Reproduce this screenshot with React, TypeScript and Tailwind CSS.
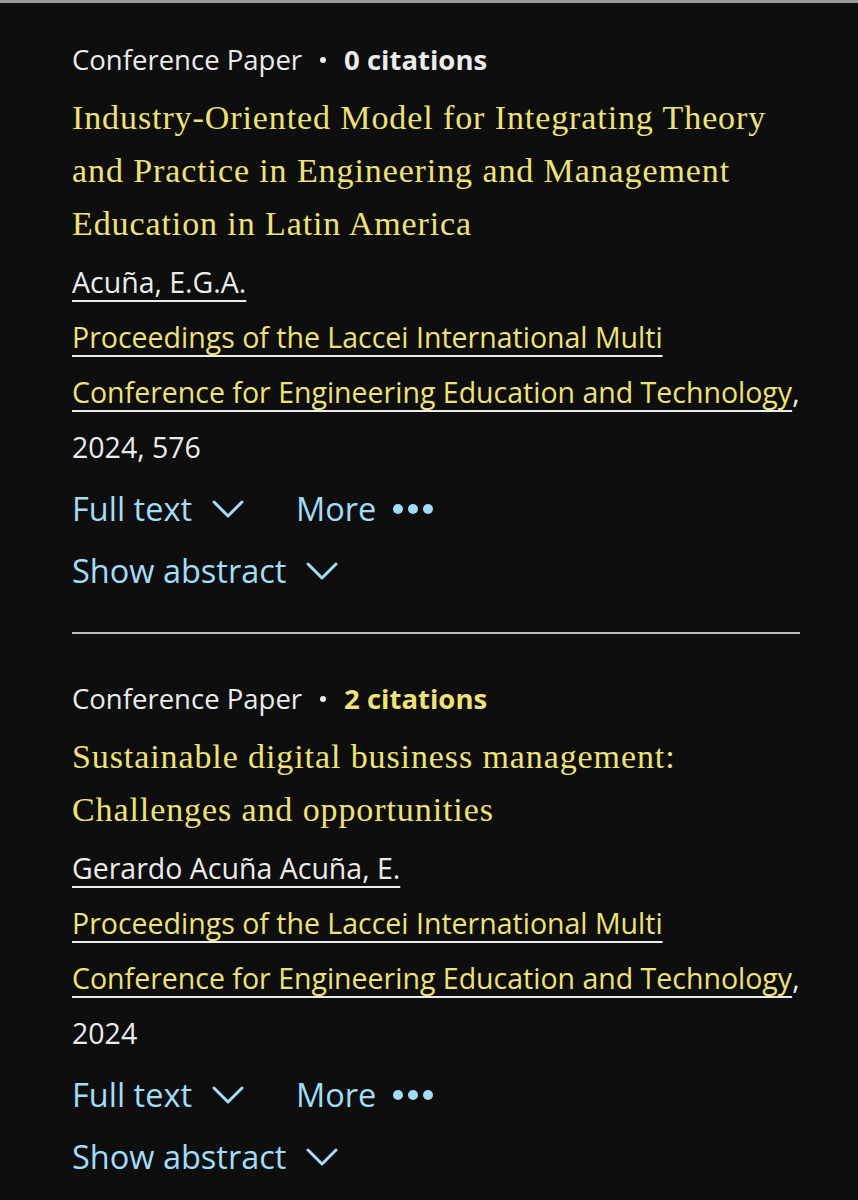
type Paper = {
  citations: number;
  title: string;
  author: string;
  journal: string[];
  tail: string;
};

const papers: Paper[] = [
  {
    citations: 0,
    title:
      "Industry-Oriented Model for Integrating Theory and Practice in Engineering and Management Education in Latin America",
    author: "Acuña, E.G.A.",
    journal: [
      "Proceedings of the Laccei International Multi",
      "Conference for Engineering Education and Technology",
    ],
    tail: "2024, 576",
  },
  {
    citations: 2,
    title: "Sustainable digital business management: Challenges and opportunities",
    author: "Gerardo Acuña Acuña, E.",
    journal: [
      "Proceedings of the Laccei International Multi",
      "Conference for Engineering Education and Technology",
    ],
    tail: "2024",
  },
];

const sans = "font-['Open_Sans',sans-serif]";

function Chevron() {
  return (
    <svg viewBox="0 0 32 18" className="ml-5 h-[18px] w-[32px]" fill="none">
      <polyline points="2,2 16,16 30,2" stroke="#a3dcf7" strokeWidth="3" strokeLinecap="round" strokeLinejoin="round" />
    </svg>
  );
}

function Dots() {
  return (
    <span className="ml-[17px] flex items-center gap-[5px]">
      <span className="h-[10px] w-[10px] rounded-full bg-[#a3dcf7]" />
      <span className="h-[10px] w-[10px] rounded-full bg-[#a3dcf7]" />
      <span className="h-[10px] w-[10px] rounded-full bg-[#a3dcf7]" />
    </span>
  );
}

function PaperItem({ p }: { p: Paper }) {
  return (
    <div className={sans}>
      <div className="flex items-center text-[27.5px] leading-[40px] text-[#ececec]">
        <span>Conference Paper</span>
        <span className="mx-[18px] h-[6px] w-[6px] rounded-full bg-[#ececec]" />
        <span className={p.citations > 0 ? "font-bold text-[#eee27b]" : "font-bold text-[#ececec]"}>
          {p.citations} citations
        </span>
      </div>
      <h3 className="mt-[4px] pt-[7px] font-['Liberation_Serif',serif] text-[34px] leading-[53px] tracking-[0.9px] text-[#eee27b]">
        {p.title}
      </h3>
      <div className="mt-[5px] text-[28.5px] leading-[55px] text-[#ececec]">
        <a className="underline decoration-[#ececec] decoration-2 underline-offset-[7px]">{p.author}</a>
      </div>
      <div className="text-[28.5px] leading-[55px] text-[#ececec]">
        <a className="text-[#eee27b] underline decoration-[#ececec] decoration-2 underline-offset-[7px]">
          {p.journal[0]}
          <br />
          {p.journal[1]}
        </a>
        ,
        <br />
        {p.tail}
      </div>
      <div className="mt-[3px] flex items-center text-[32.5px] leading-[62px] text-[#a3dcf7]">
        <span>Full text</span>
        <Chevron />
        <span className="ml-[52px]">More</span>
        <Dots />
      </div>
      <div className="flex items-center text-[32.5px] leading-[62px] text-[#a3dcf7]">
        <span>Show abstract</span>
        <Chevron />
      </div>
    </div>
  );
}

export default function App() {
  return (
    <main className="min-h-[1200px] w-full border-t-[3px] border-[#9a9a9a] bg-[#0e0e0e]">
      <div className="w-[800px] pl-[72px] pt-[37px]">
        <PaperItem p={papers[0]} />
        <div className="mt-[30px] mb-[45px] h-[2px] bg-[#bdbdbd]" />
        <PaperItem p={papers[1]} />
      </div>
    </main>
  );
}
